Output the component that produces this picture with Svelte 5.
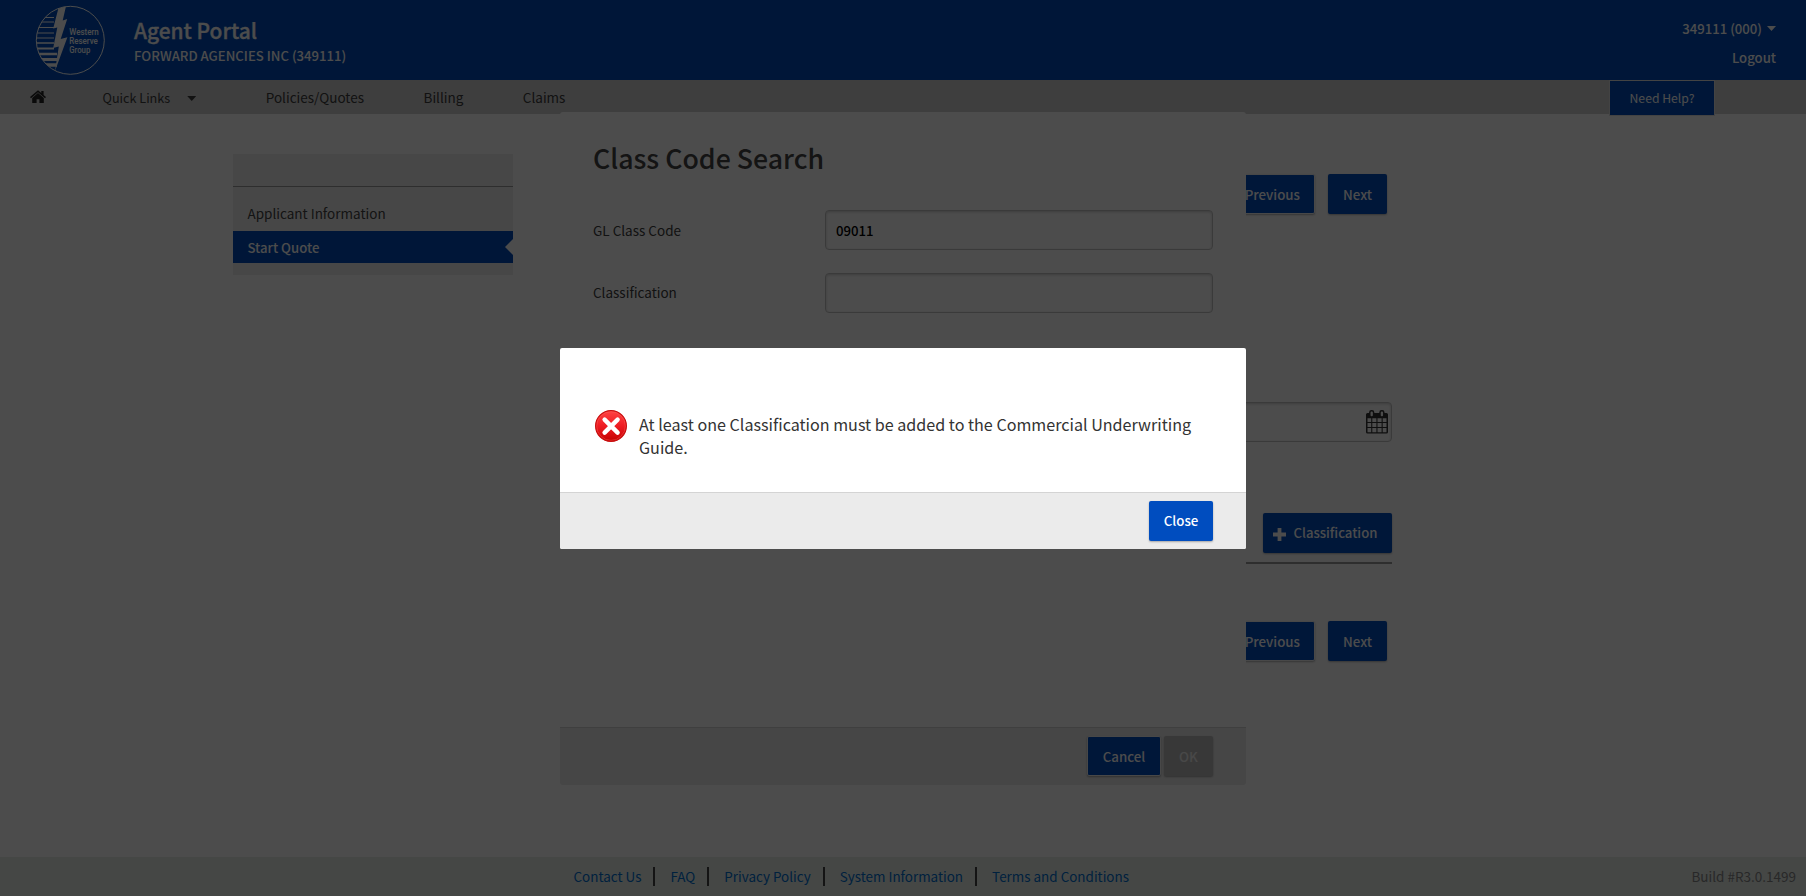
<script>
  const navLinks = ['Policies/Quotes', 'Billing', 'Claims'];
  const footerLinks = ['Contact Us', 'FAQ', 'Privacy Policy', 'System Information', 'Terms and Conditions'];
  const stripes = [
    [17.5, 46, 1], [22, 42, 1], [27.5, 39.5, 1], [33, 37, 1], [38, 36, 1.2], [43, 36, 1.5],
    [48.5, 37.5, 2], [54, 40, 2.6], [59.5, 43, 3.2], [65, 48, 3.6]
  ];
  let code = $state('09011');
  let classification = $state('');
</script>

{#snippet pager()}
  <div class="pager">
    <button class="btn outlined">Previous</button>
    <button class="btn">Next</button>
  </div>
{/snippet}

<div class="page">
  <header class="banner">
    <svg class="logo" width="72" height="72" viewBox="34 4 72 72" aria-hidden="true">
      <clipPath id="disc"><circle cx="70.3" cy="40.3" r="34" /></clipPath>
      <g clip-path="url(#disc)" stroke="#fff">
        {#each stripes as [y, x, w]}
          <line x1={x - 6} x2={y > 50 ? 57 : 54} y1={y} y2={y} stroke-width={w} />
        {/each}
        <path d="M59.5 4H66.5L62.7 20.5L67.2 19L60.7 39L67.4 37.3L55 71L58.8 46.5L53.2 48L57.3 27.5L53.2 28.5Z" fill="#fff" stroke="none" />
      </g>
      <circle cx="70.3" cy="40.3" r="34" fill="none" stroke="#fff" stroke-width="1" />
      <g class="logo-text">
        <text x="69.3" y="35.3" textLength="29.5" lengthAdjust="spacingAndGlyphs">Western</text>
        <text x="69.3" y="44.4" textLength="28.5" lengthAdjust="spacingAndGlyphs">Reserve</text>
        <text x="69.3" y="53.4" textLength="21" lengthAdjust="spacingAndGlyphs">Group</text>
      </g>
    </svg>
    <div class="brand">
      <div class="brand-name">Agent Portal</div>
      <div class="agency">FORWARD AGENCIES INC (349111)</div>
    </div>
    <div class="account">
      <div class="agent">349111 (000) <i class="caret"></i></div>
      <div>Logout</div>
    </div>
  </header>

  <nav class="nav">
    <svg class="home" width="16" height="14" viewBox="0 0 16 14" aria-hidden="true">
      <path d="M8 .2 0 7l1 1.2L8 2.3l7 5.9L16 7l-2.4-2.1V.9h-2.3v2z" />
      <path d="M8 3 2.2 7.9V13h4.4V9.3h2.8V13h4.4V7.9z" />
    </svg>
    <span class="quick">Quick Links</span>
    <i class="caret quick-caret"></i>
    <div class="links">
      {#each navLinks as l}<span>{l}</span>{/each}
    </div>
    <button class="help">Need Help?</button>
  </nav>

  <main class="main">
    <aside class="side">
      <div class="side-head"></div>
      <div class="side-item first">Applicant Information</div>
      <div class="side-item active">Start Quote</div>
    </aside>
    <section class="content">
      {@render pager()}
      <div class="date-field">
        <svg width="22" height="24" viewBox="0 0 22 24" aria-hidden="true">
          <path fill-rule="evenodd" d="M1.5 3H20.5Q22 3 22 4.5V22Q22 23.5 20.5 23.5H1.5Q0 23.5 0 22V4.5Q0 3 1.5 3ZM1.5 8.2V12H5.2V8.2ZM6.3 8.2V12H10.4V8.2ZM11.5 8.2V12H15.6V8.2ZM16.7 8.2V12H20.5V8.2ZM1.5 13V17H5.2V13ZM6.3 13V17H10.4V13ZM11.5 13V17H15.6V13ZM16.7 13V17H20.5V13ZM1.5 18V22.2H5.2V18ZM6.3 18V22.2H10.4V18ZM11.5 18V22.2H15.6V18ZM16.7 18V22.2H20.5V18Z" />
          <rect x="3.8" y=".8" width="3.8" height="6.2" rx="1.7" fill="#fff" stroke="#333" stroke-width="1.5" />
          <rect x="14" y=".8" width="3.8" height="6.2" rx="1.7" fill="#fff" stroke="#333" stroke-width="1.5" />
        </svg>
      </div>
      <div class="add-row">
        <button class="btn add">
          <svg width="13" height="13" viewBox="0 0 13 13" aria-hidden="true"><path d="M4.6 0h3.8v4.6H13v3.8H8.4V13H4.6V8.4H0V4.6h4.6z" /></svg>
          <span>Classification</span>
        </button>
      </div>
      {@render pager()}
    </section>
  </main>

  <footer class="footer">
    <div class="foot-links">
      {#each footerLinks as l}<a href="#top">{l}</a>{/each}
    </div>
    <span class="build">Build #R3.0.1499</span>
  </footer>

  <div class="search-dialog">
    <div class="search-body">
      <h1>Class Code Search</h1>
      <label class="row"><span>GL Class Code</span><input bind:value={code} /></label>
      <label class="row second"><span>Classification</span><input bind:value={classification} /></label>
    </div>
    <div class="search-actions">
      <button class="btn outlined">Cancel</button>
      <button class="btn" disabled>OK</button>
    </div>
  </div>

  <div class="backdrop">
    <div class="alert">
      <div class="alert-body">
        <svg width="32" height="32" viewBox="0 0 32 32" aria-hidden="true">
          <defs>
            <linearGradient id="red" x1="0" y1="0" x2="0" y2="1">
              <stop offset="0" stop-color="#ff4444" />
              <stop offset=".5" stop-color="#ee1c23" />
              <stop offset="1" stop-color="#c40000" />
            </linearGradient>
          </defs>
          <circle cx="16" cy="16" r="15.4" fill="url(#red)" stroke="#c80f0f" stroke-width="1.2" />
          <circle cx="16" cy="16" r="14.3" fill="none" stroke="#ff6a60" stroke-opacity=".35" />
          <path d="M9.6 9.6 22.6 22.6M22.6 9.6 9.6 22.6" stroke="#fff" stroke-width="4.4" stroke-linecap="round" />
        </svg>
        <p>At least one Classification must be added to the Commercial Underwriting Guide.</p>
      </div>
      <div class="alert-actions"><button class="btn">Close</button></div>
    </div>
  </div>
</div>

<style>
  :global(body) { margin: 0; background: #fff; }
  .page {
    position: relative;
    display: flex;
    flex-direction: column;
    width: 1806px;
    height: 896px;
    overflow: hidden;
    box-sizing: border-box;
    font: 400 13.5px/20px "Noto Sans CJK SC", "Noto Sans", sans-serif;
    color: #3c3c3c;
  }
  .page :is(button, input) { font: inherit; box-sizing: border-box; margin: 0; }

  .banner {
    display: flex;
    align-items: flex-start;
    height: 80px;
    flex: none;
    padding: 0 30px 0 34px;
    background: #004cbb;
    color: #fff;
    font-weight: 500;
    box-sizing: border-box;
  }
  .logo { margin-top: 4px; flex: none; }
  .logo-text { fill: #fff; font: 500 9.4px "Roboto", sans-serif; }
  .brand { margin-left: 28px; padding-top: 15px; }
  .brand-name { font-size: 20.9px; line-height: 31px; -webkit-text-stroke: .3px #fff; }
  .agency { font-size: 13.15px; line-height: 20px; }
  .account { margin-left: auto; padding-top: 14px; font-size: 13.15px; line-height: 29px; text-align: right; }
  .agent { display: flex; align-items: center; gap: 5px; }
  .caret { width: 9px; height: 5px; background: currentColor; clip-path: polygon(0 0, 100% 0, 50% 100%); }

  .nav {
    display: flex;
    align-items: center;
    height: 34px;
    flex: none;
    padding-left: 30px;
    background: #cfcfcf;
  }
  .home { fill: #222; }
  .quick { margin-left: 56.5px; font-size: 12.65px; line-height: 33px; }
  .quick-caret { margin-left: 17px; margin-top: 3px; }
  .links { display: flex; gap: 59.5px; margin-left: 69.5px; }
  .help {
    align-self: flex-start;
    width: 106px;
    height: 36px;
    margin: 0 91px 0 auto !important;
    padding: 0;
    border: 1px solid #dfdfdf;
    background: #004cbb;
    color: #fff;
    font-size: 12.2px !important;
  }

  .main { display: flex; flex: 1; padding-left: 233px; }
  .side {
    width: 280px;
    height: 121px;
    margin-top: 40px;
    background: #eee;
    flex: none;
  }
  .side-head { height: 32px; border-bottom: 1px solid #999; }
  .side-item { height: 32px; padding-left: 14.5px; line-height: 32px; font-size: 13.5px; box-sizing: border-box; }
  .side-item.first { margin-top: 10px; margin-bottom: 2px; color: #444; }
  .side-item.active {
    position: relative;
    background: #004cbb;
    color: #fff;
    font-size: 13.15px;
    line-height: 34px;
    font-weight: 500;
  }
  .side-item.active::after {
    content: "";
    position: absolute;
    right: 0;
    top: 8px;
    border: 8px solid transparent;
    border-right-color: #fff;
    border-left: 0;
  }

  .content { width: 779px; margin-left: 100px; padding-top: 60px; }
  .btn {
    height: 40px;
    border: 0;
    border-radius: 2px;
    background: #004dbf;
    color: #fff;
    font-weight: 500 !important;
    font-size: 13.3px !important;
    line-height: 20px;
    padding: 1px 15px 0;
    box-shadow: 0 1px 2px rgba(0, 0, 0, .3);
  }
  .btn.outlined { border: 1px solid #f0f0f0; padding: 1px 14px 0 15px; }
  .btn:disabled { background: #bdbdbd; color: #f0f0f0; }
  .pager { display: flex; justify-content: flex-end; gap: 13px; padding-right: 5px; }
  .pager .btn:last-child { width: 59px; }
  .date-field {
    display: flex;
    align-items: center;
    justify-content: flex-end;
    height: 40px;
    margin-top: 188px;
    padding-right: 3px;
    border: 1px solid #c4c4c4;
    border-radius: 4px;
    box-sizing: border-box;
    box-shadow: inset 0 1px 3px rgba(0, 0, 0, .2);
    fill: #333;
  }
  .add-row {
    display: flex;
    justify-content: flex-end;
    margin-top: 71px;
    padding-bottom: 9px;
    border-bottom: 2px solid #999;
    margin-bottom: 57px;
  }
  .btn.add { display: flex; align-items: center; gap: 8px; width: 129px; padding: 0 0 0 9.5px; white-space: nowrap; font-size: 13.15px !important; }
  .add svg { fill: #fff; margin-top: 3px; flex: none; }

  .footer {
    display: flex;
    align-items: center;
    height: 39px;
    flex: none;
    padding: 0 10px 0 573.5px;
    background: #e6eee8;
    box-sizing: border-box;
  }
  .foot-links { display: flex; align-items: center; }
  .foot-links a {
    line-height: 19px;
    font-size: 13.45px;
    padding: 0 12px 0 15px;
    border-right: 2px solid #444;
    color: #006fd0;
    text-decoration: none;
  }
  .foot-links a:first-child { padding-left: 0; }
  .foot-links a:last-child { border: 0; }
  .build { margin: -1px 0 0 auto; color: #888; }

  .search-dialog {
    position: absolute;
    left: 560px;
    top: 112px;
    display: flex;
    flex-direction: column;
    width: 686px;
    height: 673px;
    background: #fff;
    border-radius: 3px;
    overflow: hidden;
  }
  .search-body { flex: 1; padding: 26px 33px 0 33px; }
  h1 { margin: 0 0 32px; font-size: 26.7px; line-height: 40px; font-weight: 500; color: #444; }
  .row { display: flex; align-items: center; justify-content: space-between; margin-bottom: 23px; }
  .row span { padding-bottom: 1px; }
  .row.second span { padding-bottom: 3px; }
  .row input {
    width: 388px;
    height: 40px;
    padding: 0 10px;
    border: 1px solid #c4c4c4;
    border-radius: 4px;
    background: #fff;
    box-shadow: inset 0 1px 3px rgba(0, 0, 0, .2);
    color: #000;
    font-weight: 500;
    font-size: 13.2px;
  }
  .search-actions {
    display: flex;
    justify-content: flex-end;
    gap: 3px;
    height: 58px;
    padding: 8px 33px 0;
    background: #eaeaea;
    border-top: 1px solid #d4d4d4;
    box-sizing: border-box;
  }
  .search-actions .btn { width: 49px; padding-left: 0; padding-right: 0; }
  .search-actions .outlined { width: 74px; }

  .backdrop { position: absolute; inset: 0; background: rgba(0, 0, 0, .7); }
  .alert {
    position: absolute;
    left: 560px;
    top: 348px;
    width: 686px;
    height: 201px;
    display: flex;
    flex-direction: column;
    border-radius: 2px;
    overflow: hidden;
    background: #fff;
  }
  .alert-body { flex: 1; display: flex; align-items: flex-start; gap: 12px; padding: 62px 33px 0 35px; }
  .alert-body svg { flex: none; }
  .alert-body p { margin: 3px 0 0; font-size: 16.12px; line-height: 23px; color: #333; }
  .alert-actions {
    display: flex;
    justify-content: flex-end;
    height: 57px;
    padding: 8px 33px 0;
    background: #ebebeb;
    border-top: 1px solid #d4d4d4;
    box-sizing: border-box;
  }
  .alert-actions .btn { width: 64px; padding: 0; }
</style>
